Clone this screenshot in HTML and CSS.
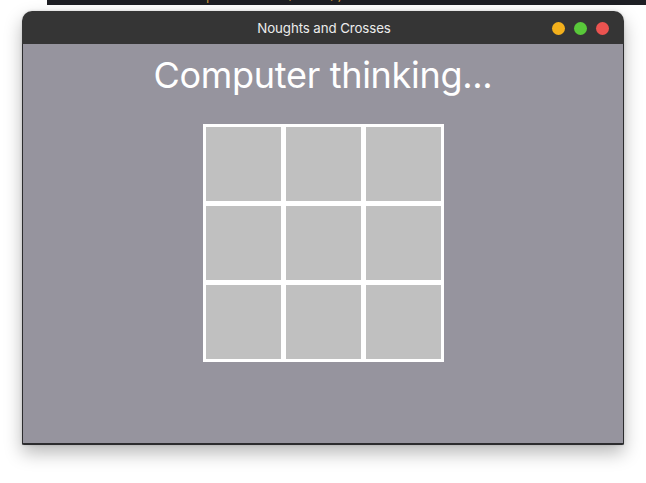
FILE: index.html
```html
<!DOCTYPE html>
<html>
<head>
<meta charset="utf-8">
<link rel="stylesheet" href="styles.css">
</head>
<body>
<div class="editor-strip"><span class="code">&nbsp;&nbsp;&nbsp;&nbsp;&nbsp;&nbsp;&nbsp;&nbsp;&nbsp;&nbsp;&nbsp;&nbsp;&nbsp;&nbsp;this.Computer.start(value);</span></div>
<div class="window">
  <div class="titlebar">
    <span class="title">Noughts and Crosses</span>
    <div class="lights">
      <span class="light yellow"></span>
      <span class="light green"></span>
      <span class="light red"></span>
    </div>
  </div>
  <div class="content">
    <h1 class="status">Computer thinking...</h1>
    <div class="board">
      <div class="cell"></div><div class="cell"></div><div class="cell"></div>
      <div class="cell"></div><div class="cell"></div><div class="cell"></div>
      <div class="cell"></div><div class="cell"></div><div class="cell"></div>
    </div>
  </div>
</div>
</body>
</html>
```
FILE: styles.css
```css
html, body {
  margin: 0;
  padding: 0;
  background: #ffffff;
  width: 646px;
  height: 483px;
  overflow: hidden;
  font-family: Inter, "Liberation Sans", sans-serif;
}

.editor-strip {
  margin-left: 47px;
  height: 5px;
  background: #1e1f24;
  overflow: hidden;
}

.code {
  display: block;
  margin-top: -10px;
  font-family: "DejaVu Sans Mono", monospace;
  font-size: 12px;
  line-height: 12px;
  color: #c9963a;
  white-space: pre;
}

.window {
  margin-top: 6px;
  margin-left: 22px;
  width: 602px;
  height: 434px;
  border-radius: 10px 10px 2px 2px;
  overflow: hidden;
  box-shadow: 0 8px 18px rgba(0, 0, 0, 0.28), 0 0 3px rgba(0, 0, 0, 0.15);
  display: flex;
  flex-direction: column;
}

.titlebar {
  height: 33px;
  flex: none;
  background: #353535;
  display: flex;
  align-items: center;
  justify-content: center;
  position: relative;
}

.title {
  color: #ececec;
  font-size: 13.3px;
  letter-spacing: -0.1px;
  margin-left: 2px;
}

.lights {
  position: absolute;
  right: 15px;
  top: 11px;
  display: flex;
  gap: 9px;
}

.light {
  width: 13px;
  height: 13px;
  border-radius: 50%;
}
.yellow { background: #f3b01c; }
.green { background: #59c83a; }
.red { background: #eb5350; }

.content {
  flex: 1;
  background: #96949e;
  border: 1px solid #2c2c2e;
  border-top: none;
  border-bottom-width: 2px;
  display: flex;
  flex-direction: column;
  align-items: center;
}

.status {
  margin: 9px 0 0 0;
  font-weight: 400;
  font-size: 36px;
  line-height: 44px;
  color: #ffffff;
  letter-spacing: -0.3px;
}

.board {
  margin-top: 27px;
  background: #ffffff;
  padding: 3px;
  display: grid;
  grid-template-columns: repeat(3, 75px);
  grid-template-rows: repeat(3, 74px);
  gap: 5px;
}

.cell {
  background: #c0c0c0;
}
```
